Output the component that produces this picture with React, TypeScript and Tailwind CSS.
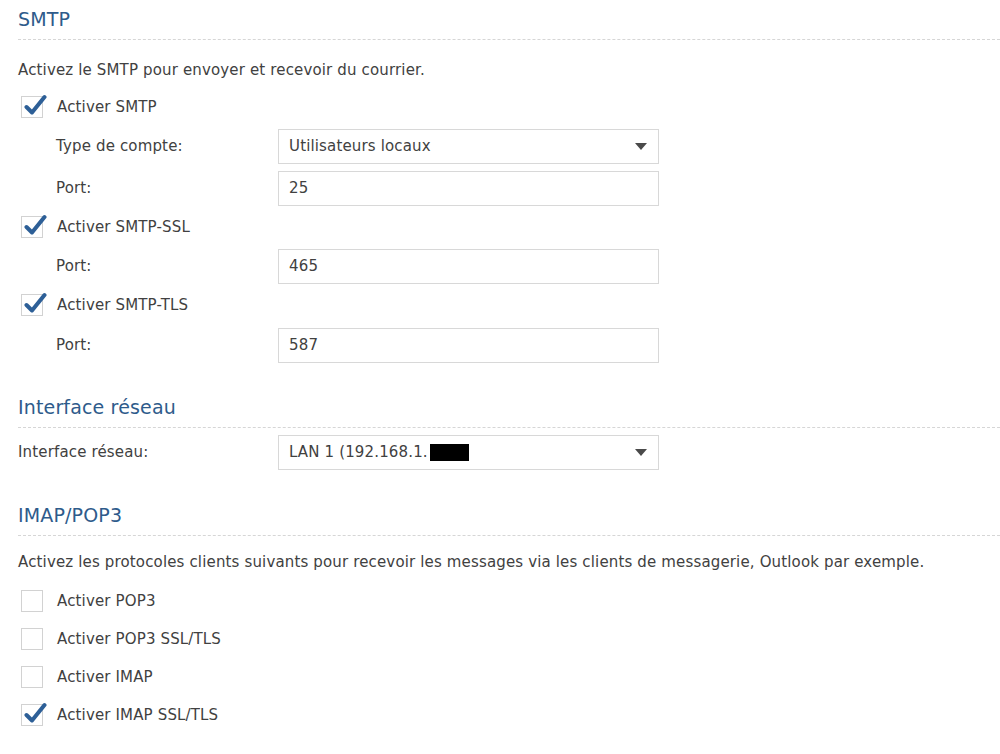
import { ReactNode } from "react";

const font = { fontFamily: '"DejaVu Sans", Verdana, sans-serif' };

function SectionTitle({ children }: { children: ReactNode }) {
  return (
    <div className="flex h-[40px] items-center border-b border-dashed border-[#d6d6d6] text-[19px] text-[#2e5b8b]">
      {children}
    </div>
  );
}

function Check({ checked, label }: { checked?: boolean; label: string }) {
  return (
    <label className="flex h-[22px] items-center">
      <span className="relative ml-[3px] size-[22px] shrink-0 border border-[#d2d2d2] bg-white">
        {checked && (
          <svg
            viewBox="0 0 24 24"
            className="absolute -top-[4px] left-[1px] size-[24px]"
            fill="none"
          >
            <path
              d="M3.5 14 L9 19.5 L21.5 4"
              stroke="#2d5f97"
              strokeWidth="4"
              strokeLinecap="round"
              strokeLinejoin="round"
            />
          </svg>
        )}
      </span>
      <span className="ml-[14px]">{label}</span>
    </label>
  );
}

function Field({
  label,
  indent,
  select,
  children,
}: {
  label: string;
  indent?: boolean;
  select?: boolean;
  children: ReactNode;
}) {
  return (
    <div className="flex items-center">
      <div className={indent ? "w-[260px] pl-[38px]" : "w-[260px]"}>{label}</div>
      <div className="flex h-[35px] w-[381px] items-center border border-[#d8d8d8] bg-white pl-[10px] pr-[11px]">
        <div className="flex flex-1 items-center">{children}</div>
        {select && (
          <svg viewBox="0 0 12 7" className="h-[7px] w-[12px]">
            <path d="M0 0 H12 L6 7 Z" fill="#4a4a4a" />
          </svg>
        )}
      </div>
    </div>
  );
}

export default function App() {
  return (
    <div
      className="h-[754px] w-[1000px] overflow-hidden bg-white pl-[18px] text-[15px] tracking-[0.15px] text-[#414141]"
      style={font}
    >
      <SectionTitle>SMTP</SectionTitle>
      <p className="mt-[19px] flex h-[22px] items-center">
        Activez le SMTP pour envoyer et recevoir du courrier.
      </p>
      <div className="mt-[15px] flex flex-col">
        <Check checked label="Activer SMTP" />
        <div className="mt-[11px]">
          <Field label="Type de compte:" indent select>
            Utilisateurs locaux
          </Field>
        </div>
        <div className="mt-[7px]">
          <Field label="Port:" indent>
            25
          </Field>
        </div>
        <div className="mt-[10px]">
          <Check checked label="Activer SMTP-SSL" />
        </div>
        <div className="mt-[11px]">
          <Field label="Port:" indent>
            465
          </Field>
        </div>
        <div className="mt-[10px]">
          <Check checked label="Activer SMTP-TLS" />
        </div>
        <div className="mt-[12px]">
          <Field label="Port:" indent>
            587
          </Field>
        </div>
      </div>

      <div className="mt-[25px]">
        <SectionTitle>Interface réseau</SectionTitle>
      </div>
      <div className="mt-[7px]">
        <Field label="Interface réseau:" select>
          LAN 1 (192.168.1.
          <span className="ml-[2px] inline-block h-[17px] w-[39px] bg-black" />
        </Field>
      </div>

      <div className="mt-[26px]">
        <SectionTitle>IMAP/POP3</SectionTitle>
      </div>
      <p className="mt-[15px] flex h-[22px] items-center">
        Activez les protocoles clients suivants pour recevoir les messages via les clients de messagerie, Outlook par exemple.
      </p>
      <div className="mt-[17px] flex flex-col gap-[16px]">
        <Check label="Activer POP3" />
        <Check label="Activer POP3 SSL/TLS" />
        <Check label="Activer IMAP" />
        <Check checked label="Activer IMAP SSL/TLS" />
      </div>
    </div>
  );
}
